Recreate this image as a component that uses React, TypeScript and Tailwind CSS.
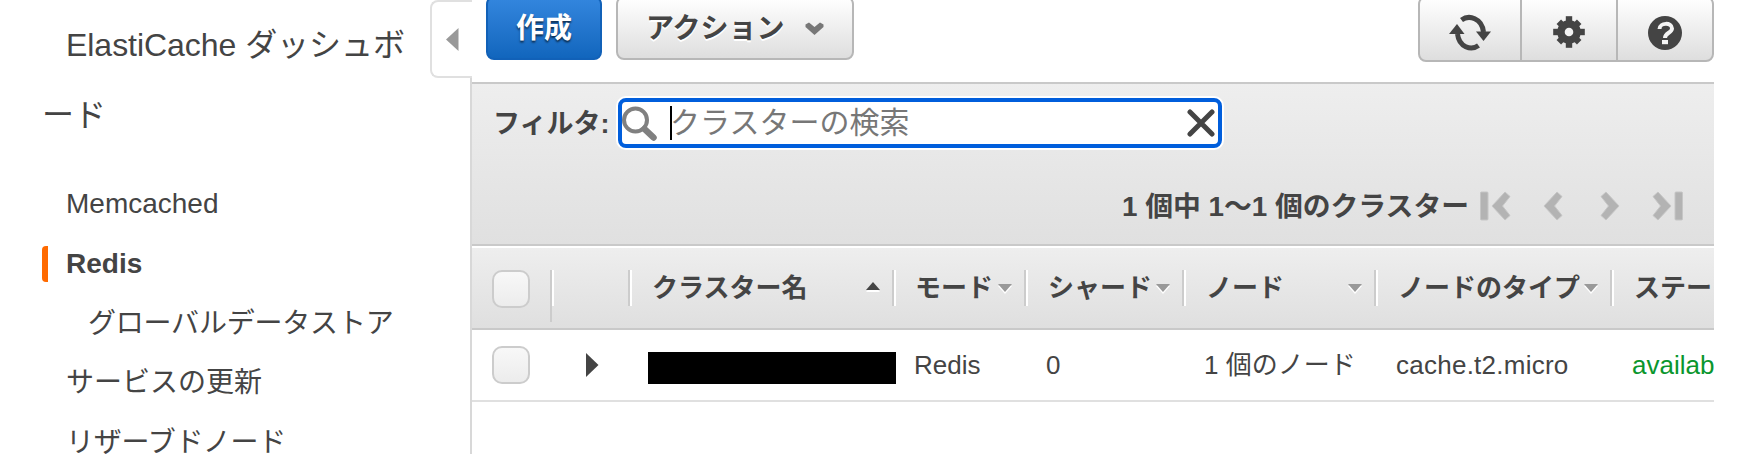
import type { ReactNode } from 'react';

type Column = {
  label: string;
  width: string;
  pad: string;
  sort?: 'up' | 'down';
};

const columns: Column[] = [
  { label: 'クラスター名', width: 'w-[264px]', pad: 'pl-[20px] pr-[12px]', sort: 'up' },
  { label: 'モード', width: 'w-[132px]', pad: 'pl-[19px] pr-[12px]', sort: 'down' },
  { label: 'シャード', width: 'w-[158px]', pad: 'pl-[20px] pr-[12px]', sort: 'down' },
  { label: 'ノード', width: 'w-[192px]', pad: 'pl-[20px] pr-[12px]', sort: 'down' },
  { label: 'ノードのタイプ', width: 'w-[236px]', pad: 'pl-[20px] pr-[12px]', sort: 'down' },
  { label: 'ステー', width: 'w-[104px]', pad: 'pl-[20px]' },
];

function SortArrow({ dir }: { dir: 'up' | 'down' }) {
  return dir === 'up' ? (
    <svg className="-mt-[3px] h-[10px] w-[14px] shrink-0" viewBox="0 0 14 10">
      <path d="M0 10L7 2L14 10Z" fill="#fff" />
      <path d="M0 8L7 0L14 8Z" fill="#444" />
    </svg>
  ) : (
    <svg className="mt-[1px] h-[10px] w-[14px] shrink-0" viewBox="0 0 14 10">
      <path d="M0 2L7 10L14 2Z" fill="#fff" />
      <path d="M0 0L7 8L14 0Z" fill="#999" />
    </svg>
  );
}

function Checkbox() {
  return (
    <span className="block size-[38px] shrink-0 rounded-[10px] border-2 border-[#ccc] bg-linear-to-b from-[#f8f8f8] to-[#ececec]" />
  );
}

function Separator() {
  return <span className="h-9 w-1 shrink-0 border-r-2 border-l-2 border-r-white border-l-[#ccc]" />;
}

function NavItem({ children, className = '' }: { children: ReactNode; className?: string }) {
  return <li className={`flex h-[60px] items-center pl-[66px] ${className}`}>{children}</li>;
}

function RefreshIcon() {
  return (
    <svg className="h-[38px] w-[42px]" viewBox="0 0 42 38">
      <g fill="none" stroke="#444" strokeWidth="5">
        <path d="M12.500 6C20 0.500 33 4 34.500 18" />
        <path d="M29.500 31.500C22 37 10 33 8.500 20" />
      </g>
      <path d="M27 17.500H42L34.500 27Z" fill="#444" />
      <path d="M0 20H15.500L8 10Z" fill="#444" />
    </svg>
  );
}

function GearIcon() {
  return (
    <svg className="size-8" viewBox="0 0 32 32">
      <g fill="#444">
        <circle cx="16" cy="16" r="11.800" />
        {[0, 45, 90, 135].map((a) => (
          <rect key={a} x="12.800" y={a % 90 ? 1.6 : 0.2} width="6.400" height={a % 90 ? 28.8 : 31.6} transform={`rotate(${a} 16 16)`} />
        ))}
      </g>
      <circle cx="16" cy="16" r="4.300" fill="#f2f2f2" />
    </svg>
  );
}

function HelpIcon() {
  return (
    <svg className="size-[34px]" viewBox="0 0 34 34">
      <circle cx="17" cy="17" r="17" fill="#444" />
      <path d="M11.500 13C11.500 6.500 24 6 24 12.500C24 17 17 16.500 17 22" fill="none" stroke="#f4f4f4" strokeWidth="4" />
      <rect x="14" y="24" width="6" height="4.200" fill="#f4f4f4" />
    </svg>
  );
}

function PageIcon({ flip = false, bar = false }: { flip?: boolean; bar?: boolean }) {
  return (
    <svg className={`h-[30px] shrink-0 ${bar ? 'w-[32px]' : 'w-[21px]'} ${flip ? '-scale-x-100' : ''}`} viewBox={bar ? '0 0 32 30' : '11 0 21 30'}>
      {bar && <rect x="0.500" y="1" width="7.500" height="28" rx="1" fill="#b3b3b3" stroke="#c6c6c6" />}
      <path d="M25 1L30 5.500L22.500 15L30 24.500L25 29L12 15Z" fill="#b3b3b3" stroke="#c6c6c6" strokeLinejoin="round" />
    </svg>
  );
}

export default function App() {
  return (
    <div className="flex h-[454px] w-[1748px] overflow-hidden bg-white font-['Liberation_Sans','Noto_Sans_CJK_JP',sans-serif] text-[#444]">
      <aside className="w-[430px] shrink-0 whitespace-nowrap">
        <div className="h-[174px] pt-[10px] text-[32px] leading-[70px]">
          <div className="pl-[66px] tracking-[-0.04px]">ElastiCache ダッシュボ</div>
          <div className="pl-[42px]">ード</div>
        </div>
        <ul className="text-[28px] leading-[40px]">
          <NavItem>Memcached</NavItem>
          <li className="flex h-[60px] items-center pl-[42px] font-bold">
            <span className="mr-[18px] h-9 w-1.5 rounded-l-[4px] bg-[#ff6a00]" />
            Redis
          </li>
          <NavItem className="h-[59px]! pl-[88px]! tracking-[-0.2px]">グローバルデータストア</NavItem>
          <NavItem>サービスの更新</NavItem>
          <NavItem className="h-[59px]! tracking-[-0.2px]">リザーブドノード</NavItem>
        </ul>
      </aside>

      <div className="flex w-[42px] shrink-0 flex-col">
        <div className="flex h-[78px] shrink-0 items-start rounded-l-[8px] border-2 border-r-0 border-[#e0e0e0] pt-[26px] pl-[14px]">
          <svg className="h-[23px] w-[13px]" viewBox="0 0 13 23">
            <path d="M0 11.500L12.500 0V23Z" fill="#999" />
          </svg>
        </div>
        <div className="grow border-r-2 border-[#d8d8d8]" />
      </div>

      <main className="flex w-[1242px] shrink-0 flex-col overflow-hidden whitespace-nowrap">
        <div className="flex h-[82px] shrink-0 items-start pl-[14px]">
          <button className="-mt-1 flex h-16 w-[116px] items-center justify-center rounded-[8px] border-2 border-[#1161b8] bg-linear-to-b from-[#3386de] to-[#1166bd] pt-[2px] text-[28px] leading-[40px] font-bold text-white [text-shadow:0_2px_2px_rgba(0,0,0,0.6)]">
            作成
          </button>
          <button className="-mt-1 ml-[14px] flex h-16 w-[238px] items-center rounded-[8px] border-2 border-[#b7b7b7] bg-linear-to-b from-white to-[#dedede] pt-[2px] pl-[28px] text-[28px] leading-[40px] font-bold [text-shadow:0_2px_0_#fff]">
            アクション
            <svg className="-mt-[1px] ml-[20px] h-[14px] w-[19px]" viewBox="0 0 19 14">
              <path d="M0.500 2.500L4 0.500L9.500 5L15 0.500L18.500 2.500V5L9.500 13L0.500 5Z" fill="#777" />
            </svg>
          </button>
          <div className="-mt-1 ml-auto flex h-[66px] w-[296px] divide-x-2 divide-[#b7b7b7] rounded-[8px] border-2 border-[#b7b7b7] bg-linear-to-b from-white to-[#dedede]">
            <span className="flex w-[102px] justify-center pt-[16px]"><RefreshIcon /></span>
            <span className="flex w-[96px] justify-center pt-[18px]"><GearIcon /></span>
            <span className="flex w-[94px] justify-center pt-[18px]"><HelpIcon /></span>
          </div>
        </div>

        <section className="flex h-[164px] shrink-0 flex-col border-y-2 border-[#c9c9c9] bg-linear-to-b from-[#eee] to-[#e0e0e0]">
          <div className="flex pt-[14px] pl-[21px]">
            <label className="w-[125px] pt-[6px] text-[27px] leading-[40px] font-bold">フィルタ:</label>
            <div className="flex h-[50px] w-[604px] items-center rounded-[8px] border-4 border-[#005edc] bg-white shadow-[0_0_0_2px_#fff]">
              <svg className="h-[35px] w-[35px] shrink-0" viewBox="0 0 35 35">
                <circle cx="13.500" cy="14" r="11.500" fill="none" stroke="#808080" strokeWidth="4" />
                <path d="M22.500 23L31.500 31.500" stroke="#808080" strokeWidth="6.500" strokeLinecap="round" />
              </svg>
              <span className="ml-[13px] h-[34px] w-[2px] shrink-0 bg-black" />
              <span className="-ml-[2px] text-[30px] leading-[40px] text-[#777]">クラスターの検索</span>
              <svg className="mr-[3px] ml-auto size-[28px] shrink-0" viewBox="0 0 28 28">
                <path d="M3 3L25 25M25 3L3 25" stroke="#444" strokeWidth="5" strokeLinecap="round" />
              </svg>
            </div>
          </div>
          <div className="mt-[37px] flex items-center justify-end pr-[31px]">
            <span className="mr-[11px] pt-[2px] text-[27.8px] leading-[40px] font-bold">1 個中 1〜1 個のクラスター</span>
            <PageIcon bar />
            <span className="ml-[31px] flex"><PageIcon /></span>
            <span className="ml-[35px] flex"><PageIcon flip /></span>
            <span className="ml-[31px] flex"><PageIcon flip bar /></span>
          </div>
        </section>

        <div className="flex h-[84px] shrink-0 items-start border-t-2 border-b-2 border-t-white border-b-[#c9c9c9] bg-linear-to-b from-[#eee] to-[#dfdfdf] pt-[22px] text-[26px] leading-[36px] font-bold">
          <div className="w-[78px] shrink-0 pl-[20px]"><Checkbox /></div>
          <div className="flex w-[78px] shrink-0 items-start">
            <span className="h-[52px] w-[2px] bg-[#ccc]" />
            <span className="h-9 w-[2px] bg-white" />
          </div>
          {columns.map((c) => (
            <div key={c.label} className={`flex shrink-0 items-center ${c.width}`}>
              <Separator />
              <div className={`flex grow items-center justify-between ${c.pad}`}>
                <span>{c.label}</span>
                {c.sort && <SortArrow dir={c.sort} />}
              </div>
            </div>
          ))}
        </div>

        <div className="flex h-[72px] shrink-0 items-center border-b-2 border-[#e0e0e0] text-[26px] leading-[36px]">
          <div className="w-[114px] shrink-0 pl-[20px]"><Checkbox /></div>
          <div className="w-[62px] shrink-0">
            <svg className="h-[24px] w-[13px]" viewBox="0 0 13 24">
              <path d="M0 0L12.500 12L0 24Z" fill="#444" />
            </svg>
          </div>
          <div className="mt-[6px] h-8 w-[248px] shrink-0 bg-black" />
          <div className="w-[150px] shrink-0 pl-[18px]">Redis</div>
          <div className="w-[158px] shrink-0">0</div>
          <div className="w-[192px] shrink-0">1 個のノード</div>
          <div className="w-[236px] shrink-0 tracking-[0.25px]">cache.t2.micro</div>
          <div className="shrink-0 text-[#0a962d]">availab</div>
        </div>
      </main>
    </div>
  );
}
